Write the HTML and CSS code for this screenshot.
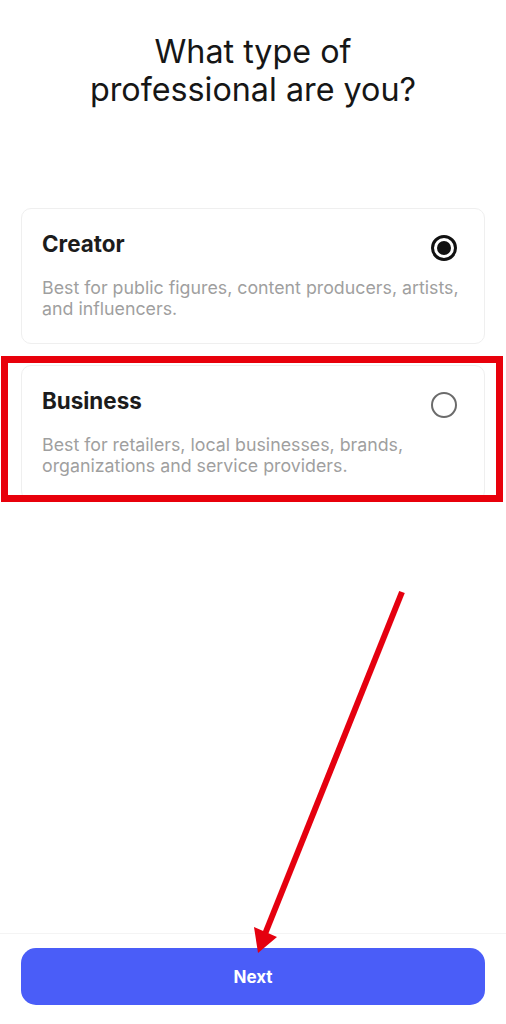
FILE: index.html
```html
<!DOCTYPE html>
<html lang="en">
<head>
<meta charset="utf-8">
<title>What type of professional are you?</title>
<link rel="stylesheet" href="styles.css">
</head>
<body>
<main class="screen">
  <h1 class="title">What type of<br>professional are you?</h1>
  <section class="options">
    <div class="card">
      <div class="card-head">
        <span class="card-title">Creator</span>
        <span class="radio radio-on"><span class="radio-dot"></span></span>
      </div>
      <p class="card-desc">Best for public figures, content producers, artists, and influencers.</p>
    </div>
    <div class="card">
      <div class="card-head">
        <span class="card-title">Business</span>
        <span class="radio radio-off"></span>
      </div>
      <p class="card-desc">Best for retailers, local businesses, brands, organizations and service providers.</p>
    </div>
  </section>
  <div class="spacer"></div>
  <footer class="footer">
    <button class="next-btn" type="button">Next</button>
  </footer>
  <div class="highlight"></div>
  <svg class="arrow" width="506" height="1024" viewBox="0 0 506 1024" xmlns="http://www.w3.org/2000/svg">
    <line x1="402" y1="592" x2="265" y2="934" stroke="#e5000f" stroke-width="6" stroke-linecap="butt"/>
    <polygon points="254,927 277,937 258,953" fill="#e5000f"/>
  </svg>
</main>
</body>
</html>
```
FILE: styles.css
```css
* { box-sizing: border-box; }
html, body {
  margin: 0;
  padding: 0;
  background: #ffffff;
}
body {
  font-family: Inter, "Noto Sans", Roboto, sans-serif;
  color: #1c1c1c;
}
.screen {
  position: relative;
  width: 506px;
  height: 1024px;
  display: flex;
  flex-direction: column;
  overflow: hidden;
}
.title {
  margin: 33px 0 0;
  font-size: 32.3px;
  line-height: 38px;
  font-weight: 400;
  text-align: center;
  color: #161616;
  letter-spacing: 0;
}
.options {
  margin-top: 99px;
  padding: 0 21px 0 21px;
  display: flex;
  flex-direction: column;
  gap: 21px;
}
.card {
  border: 1px solid #efefef;
  border-radius: 10px;
  padding: 21px 20px 24px 20px;
  background: #ffffff;
}
.card-head {
  display: flex;
  justify-content: space-between;
  align-items: flex-start;
}
.card-title {
  font-size: 22.4px;
  line-height: 28px;
  font-weight: 700;
  color: #1c1c1c;
}
.radio {
  width: 26px;
  height: 26px;
  border-radius: 50%;
  margin-top: 5px;
  margin-right: 7px;
  display: flex;
  align-items: center;
  justify-content: center;
  flex: none;
}
.radio-on {
  border: 3px solid #111111;
}
.radio-dot {
  width: 14px;
  height: 14px;
  border-radius: 50%;
  background: #111111;
}
.radio-off {
  border: 2px solid #6b6b6b;
}
.card-desc {
  margin: 16px 0 0;
  font-size: 17.8px;
  line-height: 21px;
  color: #9f9f9f;
}
.spacer { flex: 1; }
.footer {
  border-top: 1px solid #f4f4f4;
  padding: 14px 21px 19px 21px;
}
.next-btn {
  display: block;
  width: 100%;
  height: 57px;
  border: none;
  border-radius: 15px;
  background: #4a5df8;
  color: #ffffff;
  font-family: Inter, "Noto Sans", Roboto, sans-serif;
  font-size: 17px;
  font-weight: 700;
}
.highlight {
  position: absolute;
  left: 1px;
  top: 356px;
  width: 502px;
  height: 146px;
  border: 7px solid #e8000b;
  pointer-events: none;
}
.arrow {
  position: absolute;
  left: 0;
  top: 0;
  pointer-events: none;
}
```
